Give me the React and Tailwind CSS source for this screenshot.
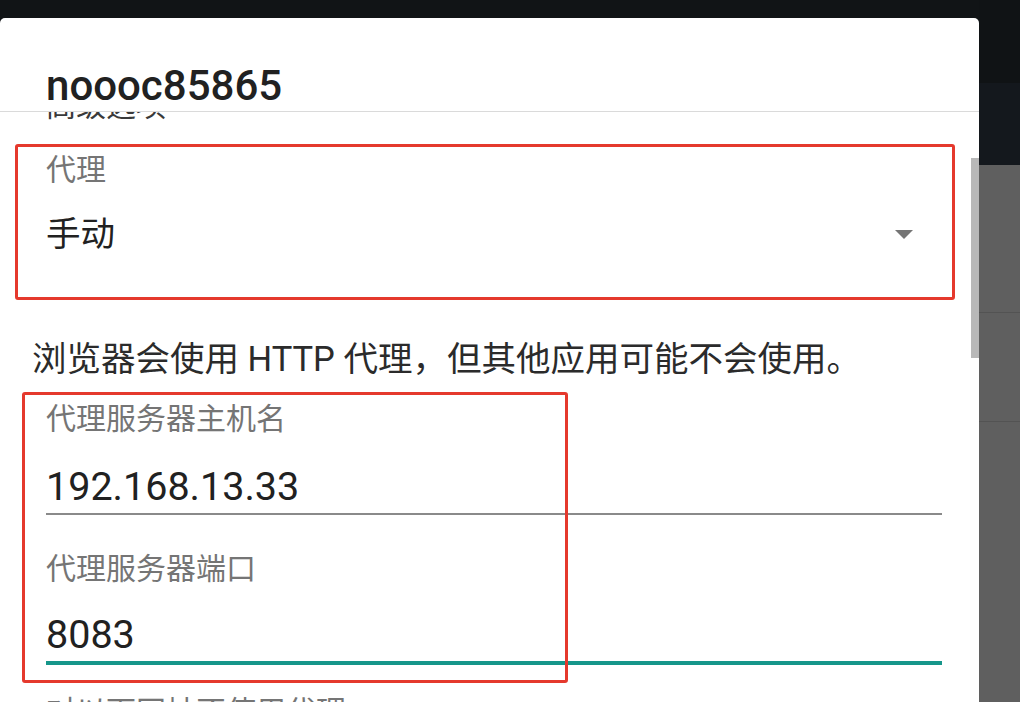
export default function App() {
  return (
    <div className="flex h-[702px] w-[1020px] overflow-hidden bg-[#111416] font-['Roboto','Noto_Sans_CJK_SC',sans-serif]">
      <div className="flex w-[979px] flex-col pt-[18px]">
        <div className="flex flex-1 flex-col overflow-hidden rounded-t-[5px] bg-white">
          <header className="h-[94px] shrink-0 border-b border-[#dadada] pl-[46px] pt-[46.5px]">
            <h1 className="text-[42px] font-medium leading-none text-[#212121]">noooc85865</h1>
          </header>

          <div className="relative flex-1 overflow-hidden">
            <div className="-mt-[21px] pl-[46px] text-[30px] leading-none text-[#3a3a3a]">高级选项</div>

            {/* proxy spinner */}
            <div className="pl-[46px] pr-[66px]">
              <div className="mt-[34px] text-[30px] leading-none text-[#757575]">代理</div>
              <div className="mt-[32px] flex items-center justify-between">
                <span className="text-[34.5px] leading-none text-[#212121]">手动</span>
                <svg width="18" height="9" viewBox="0 0 18 9">
                  <path d="M0 0H18L9 9Z" fill="#757575" />
                </svg>
              </div>
            </div>

            <p className="mt-[90px] pl-[32px] text-[34.5px] leading-none text-[#2b2b2b]">
              浏览器会使用 HTTP 代理，但其他应用可能不会使用。
            </p>

            <div className="pl-[46px] pr-[37px]">
              <div className="mt-[27.5px] text-[30px] leading-none text-[#757575]">代理服务器主机名</div>
              <div className="mt-[33px] text-[39.5px] leading-none text-[#212121]">192.168.13.33</div>
              <div className="mt-[6.5px] h-[2px] bg-[#8a8a8a]" />

              <div className="mt-[39px] text-[30px] leading-none text-[#757575]">代理服务器端口</div>
              <div className="mt-[31px] text-[39.5px] leading-none text-[#212121]">8083</div>
              <div className="mt-[6.5px] h-[4px] bg-[#16968a]" />

              <div className="mt-[32px] text-[30px] leading-none text-[#757575]">对以下网址不使用代理</div>
            </div>

            {/* scrollbar */}
            <div className="absolute right-0 top-[46px] h-[200px] w-[8px] bg-[#b8b8b8]" />

            {/* annotation boxes */}
            <div className="absolute left-[15px] top-[32px] h-[156px] w-[940px] rounded-[3px] border-[3px] border-[#e5392d]" />
            <div className="absolute left-[22px] top-[280px] h-[291px] w-[546px] rounded-[3px] border-[3px] border-[#e5392d]" />
          </div>
        </div>
      </div>

      <div className="flex flex-1 flex-col">
        <div className="h-[83px] bg-[#101315]" />
        <div className="h-[82px] bg-[#14181d]" />
        <div className="h-[148px] border-b border-[#535353] bg-[#5f5f5f]" />
        <div className="h-[109px] border-b border-[#535353] bg-[#5f5f5f]" />
        <div className="flex-1 bg-[#5f5f5f]" />
      </div>
    </div>
  );
}
